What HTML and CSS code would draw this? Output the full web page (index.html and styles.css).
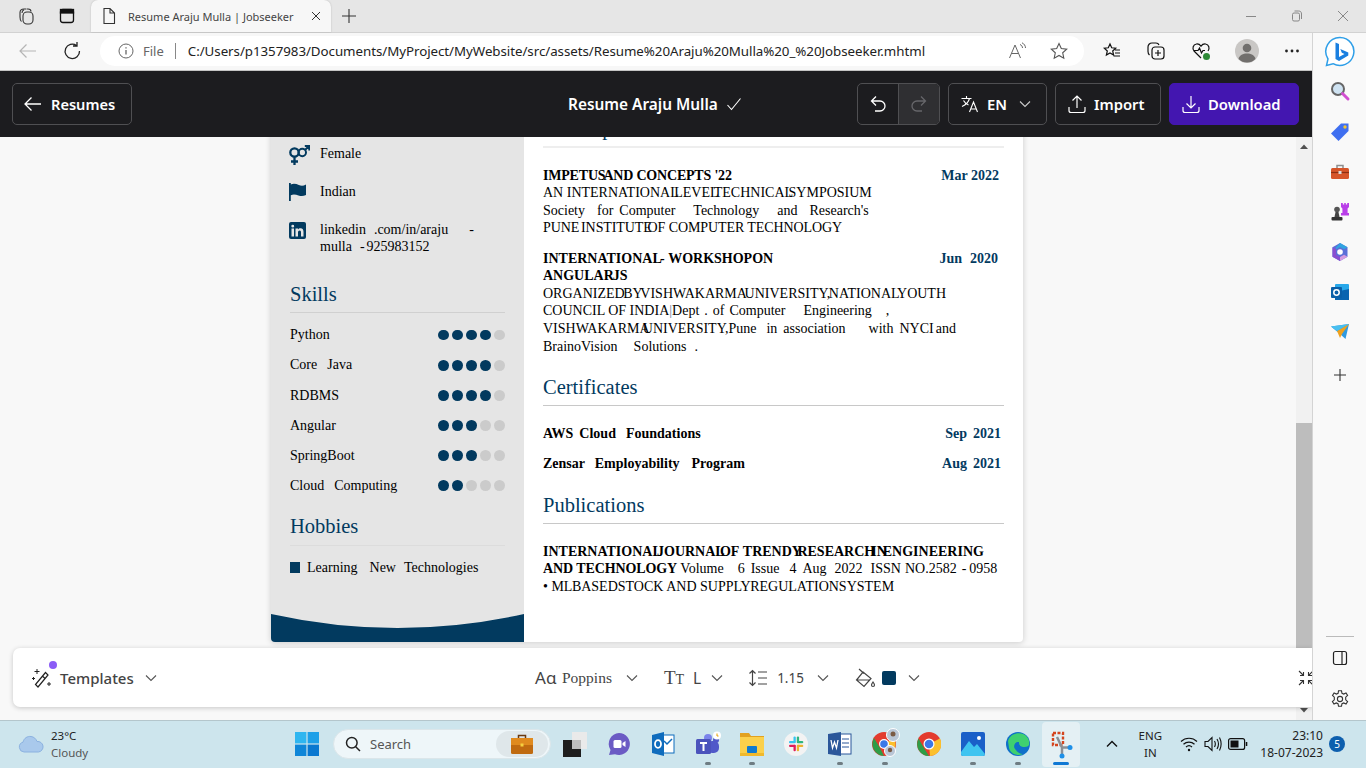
FILE: index.html
```html
<!DOCTYPE html>
<html lang="en">
<head>
<meta charset="utf-8">
<title>Resume Araju Mulla | Jobseeker</title>
<link rel="stylesheet" href="styles.css">
</head>
<body>
<svg class="sprite" aria-hidden="true">
  <symbol id="chev" viewBox="0 0 12 8"><path d="M1 1.500 6 6.500 11 1.500" fill="none" stroke="currentColor" stroke-width="1.100"/></symbol>
</svg>

<header class="tabstrip">
  <svg class="ts-ico first" width="20" height="20" viewBox="0 0 20 20" fill="none" stroke="#333" stroke-width="1.100"><rect x="7" y="6" width="10" height="12" rx="4"/><path d="M5.500 15.500C4 14.500 4 13 4 11V6.500C4 4 5.500 3 8 3h2.500M8 3.800C6.500 4.500 6 5.500 6 7"/><path d="M11 3h1c2 0 3 1 3 2.500"/></svg>
  <svg class="ts-ico second" width="20" height="20" viewBox="0 0 20 20" fill="none" stroke="#111" stroke-width="1.300"><rect x="3.500" y="3.500" width="13" height="13" rx="2.500"/><rect x="3.500" y="3.500" width="13" height="3.500" fill="#111"/></svg>
  <div class="tab">
    <svg width="16" height="18" viewBox="0 0 16 18" fill="none" stroke="#333" stroke-width="1.100"><path d="M3 1.500h6l4.500 4.500v10.500H3zM9 1.500V6h4.500"/></svg>
    <span class="tab-title">Resume Araju Mulla | Jobseeker</span>
    <svg class="tab-x" width="10" height="10" viewBox="0 0 10 10" stroke="#333" stroke-width="1"><path d="M1 1l8 8M9 1l-8 8"/></svg>
  </div>
  <svg class="tab-new" width="16" height="16" viewBox="0 0 16 16" stroke="#333" stroke-width="1.100"><path d="M8 1v14M1 8h14"/></svg>
  <div class="winctl">
    <svg width="12" height="12" viewBox="0 0 12 12" stroke="#888"><path d="M1 6.500h10"/></svg>
    <svg width="12" height="12" viewBox="0 0 12 12" fill="none" stroke="#888"><rect x="1.500" y="3" width="7" height="8" rx="1.500"/><path d="M3.500 1h4c2 0 3 1 3 3v5"/></svg>
    <svg width="12" height="12" viewBox="0 0 12 12" stroke="#888"><path d="M1 1l10 10M11 1 1 11"/></svg>
  </div>
</header>

<div class="browser">
  <div class="page">
    <nav class="toolbar">
      <svg class="tb-back" width="20" height="16" viewBox="0 0 20 16" fill="none" stroke="#b5b5b5" stroke-width="1.200"><path d="M18 8H2M8.500 1.500 2 8l6.500 6.500"/></svg>
      <svg class="tb-reload" width="20" height="20" viewBox="0 0 20 20" fill="none" stroke="#222" stroke-width="1.300"><path d="M14.500 4.500a7.200 7.200 0 1 0 3 5.500M15 1v4h-4"/></svg>
      <div class="addr">
        <svg width="16" height="16" viewBox="0 0 16 16" fill="none" stroke="#666"><circle cx="8" cy="8" r="7"/><path d="M8 7v4.500M8 4.200v1.300" stroke-width="1.300"/></svg>
        <span class="addr-file">File</span>
        <span class="addr-sep"></span>
        <span class="addr-url">C:/Users/p1357983/Documents/MyProject/MyWebsite/src/assets/Resume%20Araju%20Mulla%20_%20Jobseeker.mhtml</span>
        <svg class="addr-read" width="20" height="18" viewBox="0 0 20 18" fill="none" stroke="#666" stroke-width="1"><path d="M1.500 16 7 3l5.500 13M3.500 11.500h7"/><path d="M12 2.500c1.500.5 2.500 2 2.500 3.500M14 .8c2.200 1 3.500 3 3.500 5.200"/></svg>
        <svg class="addr-star" width="18" height="18" viewBox="0 0 18 18" fill="none" stroke="#555" stroke-width="1.100"><path d="M9 1.500l2.300 5 5.400.6-4 3.700 1.100 5.400L9 13.500l-4.800 2.700 1.100-5.400-4-3.700 5.400-.6z"/></svg>
      </div>
      <div class="tb-actions">
        <svg width="18" height="18" viewBox="0 0 18 18" fill="none" stroke="#111" stroke-width="1.200"><path d="M7 2l1.700 3.800 4 .4-3 2.800.9 4L7 11l-3.600 2 .9-4-3-2.800 4-.4zM12 8h5M12 11h5M10.500 14h6.500"/></svg>
        <svg width="20" height="20" viewBox="0 0 20 20" fill="none" stroke="#111" stroke-width="1.200"><rect x="6" y="6" width="12" height="12" rx="3"/><path d="M12 9v6M9 12h6M3.500 14C2.500 13 2 12 2 10.500V6c0-2 1.500-4 4-4h4c1.500 0 2.500.7 3 2"/></svg>
        <svg width="20" height="20" viewBox="0 0 20 20" fill="none" stroke="#111" stroke-width="1.200"><path d="M10 17 3 10C1 7.500 2 3.500 5.500 3c2-.2 3.500.8 4.500 2.200C11 3.800 12.500 2.800 14.500 3c3.500.5 4.500 4.500 2.500 7"/><path d="M3 9.500h4l1.500-2.500 2 5 1.500-2.500h2"/><circle cx="15.500" cy="15.500" r="3.500" fill="#2e8b38" stroke="none"/></svg>
        <svg width="24" height="24" viewBox="0 0 24 24"><circle cx="12" cy="12" r="12" fill="#c9c7c5"/><circle cx="12" cy="9" r="4.300" fill="#716f6d"/><path d="M3.500 20c1-4 4.500-5.500 8.500-5.500s7.500 1.500 8.500 5.500a12 12 0 0 1-17 0z" fill="#716f6d"/></svg>
        <svg width="16" height="4" viewBox="0 0 16 4" fill="#222"><circle cx="2.500" cy="2" r="1.400"/><circle cx="8" cy="2" r="1.400"/><circle cx="13.500" cy="2" r="1.400"/></svg>
      </div>
    </nav>

    <section class="app">
      <div class="appbar">
        <a class="btn btn-back">
          <svg width="20" height="16" viewBox="0 0 20 16" fill="none" stroke="#fff" stroke-width="1.300"><path d="M18 8H2M8.500 1.500 2 8l6.500 6.500"/></svg>
          Resumes
        </a>
        <div class="doc-title">
          Resume Araju Mulla
          <svg width="16" height="14" viewBox="0 0 16 14" fill="none" stroke="#fff" stroke-width="1.100"><path d="M1.500 8 5.500 12.500 14.500 1.500"/></svg>
        </div>
        <div class="bar-actions">
          <div class="undo-group">
            <span class="undo">
              <svg width="20" height="20" viewBox="0 0 20 20" fill="none" stroke="#fff" stroke-width="1.300"><path d="M8 2.500 3.500 7 8 11.500M3.500 7H12a4.500 4.500 0 0 1 0 10H7"/></svg>
            </span>
            <span class="redo">
              <svg width="20" height="20" viewBox="0 0 20 20" fill="none" stroke="#66666a" stroke-width="1.300"><path d="M12 2.500 16.500 7 12 11.500M16.500 7H8a4.500 4.500 0 0 0 0 10h5"/></svg>
            </span>
          </div>
          <a class="btn btn-lang">
            <svg width="20" height="20" viewBox="0 0 20 20" fill="none" stroke="#fff" stroke-width="1.100"><path d="M1.500 4.500h10M6.500 2v2.500M9.500 4.500C8.500 8 5.500 11 2 12.500M3.500 6.500c1 2 3 3.500 5 4.500M9.500 18l4-10 4 10M11 15h5"/></svg>
            EN
            <svg class="chev-l" width="12" height="8"><use href="#chev"/></svg>
          </a>
          <a class="btn btn-import">
            <svg width="20" height="20" viewBox="0 0 20 20" fill="none" stroke="#fff" stroke-width="1.200"><path d="M10 14V2M5.500 6.500 10 2l4.500 4.500M2 13v3.500a2 2 0 0 0 2 2h12a2 2 0 0 0 2-2V13"/></svg>
            Import
          </a>
          <a class="btn btn-download">
            <svg width="20" height="20" viewBox="0 0 20 20" fill="none" stroke="#fff" stroke-width="1.200"><path d="M10 2v12M5.500 9.500 10 14l4.500-4.500M2 13v3.500a2 2 0 0 0 2 2h12a2 2 0 0 0 2-2V13"/></svg>
            Download
          </a>
        </div>
      </div>

      <div class="viewport">
        <div class="canvas">
          <article class="resume">
            <aside class="side">
              <div class="side-body">
                <div class="contact">
                  <svg class="c-ico" width="22" height="20" viewBox="0 0 22 20" fill="none" stroke="#023a5f" stroke-width="2.300"><circle cx="6.500" cy="7.500" r="4.200"/><path d="M6.500 12v8M3 16.500h7"/><circle cx="14.300" cy="7.500" r="3.700" stroke-width="2"/><path d="M17 5l4-4M16.800 1H21.300V5.500" stroke-width="2"/></svg>
                  <span>Female</span>
                </div>
                <div class="contact">
                  <svg class="c-ico" width="22" height="18" viewBox="0 0 22 18" fill="#023a5f"><path d="M1 0h1.800v1.500c3-1.200 5.500-.5 8 .5s4.500 1 7.200-.5V12c-2.700 1.400-5 1.400-7.500.5S5.500 11 2.800 12.200V18H1z"/></svg>
                  <span>Indian</span>
                </div>
                <div class="contact">
                  <svg class="c-ico" width="22" height="20" viewBox="0 0 22 20"><rect x="1" y="1" width="17" height="17" rx="2" fill="#023a5f"/><path fill="#e5e5e5" d="M3.500 7.500h2.500V15.500H3.500zM4.750 3.700a1.450 1.450 0 1 1 0 2.900 1.450 1.450 0 0 1 0-2.900zM7.500 7.500H10v1.100c.5-.8 1.400-1.300 2.500-1.300 2.200 0 3 1.400 3 3.700v4.500H13v-4c0-1.200-.3-2-1.300-2-1.100 0-1.700.8-1.700 2v4H7.500z"/></svg>
                  <span class="contact-lines"><span class="ln"><span class="g8">linkedin .com/in/araju</span><span class="dash-gap">-</span></span><span class="ln"><span class="g8">mulla -</span><span class="g2"> </span>925983152</span></span>
                </div>

                <h2 class="sec side-sec">Skills</h2>
                <ul class="skills">
                  <li><span>Python</span><span class="dots"><i></i><i></i><i></i><i></i><i class="off"></i></span></li>
                  <li><span class="g10">Core Java</span><span class="dots"><i></i><i></i><i></i><i></i><i class="off"></i></span></li>
                  <li><span>RDBMS</span><span class="dots"><i></i><i></i><i></i><i></i><i class="off"></i></span></li>
                  <li><span>Angular</span><span class="dots"><i></i><i></i><i></i><i class="off"></i><i class="off"></i></span></li>
                  <li><span>SpringBoot</span><span class="dots"><i></i><i></i><i></i><i class="off"></i><i class="off"></i></span></li>
                  <li><span class="g10">Cloud Computing</span><span class="dots"><i></i><i></i><i class="off"></i><i class="off"></i><i class="off"></i></span></li>
                </ul>

                <h2 class="sec side-sec hob">Hobbies</h2>
                <div class="hobby"><i class="sq-bullet"></i><span><span class="g12">Learning New</span><span class="g8"> </span>Technologies</span></div>
              </div>
              <svg class="curve" width="253" height="28" viewBox="0 0 253 28" preserveAspectRatio="none"><path d="M0 0Q126.500 28 253 0V28H0z" fill="#023a5f"/></svg>
            </aside>

            <div class="body">
              <h2 class="sec first-sec">Accomplishments</h2>

              <div class="entry">
                <div class="e-top"><b class="ln tight"><span class="cl">IMPETUS AND</span> CONCEPTS '22</b><b class="date">Mar 2022</b></div>
                <span class="ln">AN <span class="ov">INTERNATIONAL LEVEL TECHNICAL SYMPOSIUM</span></span>
                <span class="ln"><span class="g12">Society </span>for<span class="g6"> </span>Computer<span class="g18"> </span>Technology<span class="g18"> </span>and<span class="g12"> </span>Research's</span>
                <span class="ln tighter"><span class="g2">PUNE </span><span class="ov">INSTITUTE OF</span> COMPUTER TECHNOLOGY</span>
              </div>

              <div class="entry second">
                <div class="e-top"><b class="ln"><span class="cl">INTERNATIONAL -</span> <span class="g6">WORKSHOP</span><span class="ov"> </span>ON</b><b class="date date-jun g8">Jun 2020</b></div>
                <b class="ln"><span class="cl">ANGULAR JS</span></b>
                <span class="ln"><span class="cl5">ORGANIZED BY VISHWAKARMA UNIVERSITY, NATIONAL YOUTH</span></span>
                <span class="ln">COUNCIL OF INDIA<span class="bar">|</span><span class="g5">Dept . of Computer</span><span class="g18"> </span><span class="g14">Engineering ,</span></span>
                <span class="ln"><span class="ov3">VISHWAKARMA UNIVERSITY,</span><span class="g10">Pune </span><span class="g6">in association</span><span class="g23"> </span><span class="g6">with NYCI</span><span class="g2"> </span>and</span>
                <span class="ln nudge"><span class="g16">BrainoVision </span><span class="g8">Solutions .</span></span>
              </div>

              <h2 class="sec">Certificates</h2>
              <div class="cert first-cert"><b><span class="g6">AWS Cloud</span><span class="g10"> </span>Foundations</b><b class="date g6">Sep 2021</b></div>
              <div class="cert"><b><span class="g10">Zensar </span>Employability<span class="g12"> </span>Program</b><b class="date g6">Aug 2021</b></div>

              <h2 class="sec pub">Publications</h2>
              <div class="entry first-cert">
                <b class="ln"><span class="ov">INTERNATIONAL JOURNAL OF</span> <span class="ov">TRENDY RESEARCH IN ENGINEERING</span></b>
                <span class="ln"><b class="tighter">AND TECHNOLOGY</b> Volume<span class="g14"> </span>6<span class="g6"> </span>Issue<span class="g10"> </span>4<span class="g6"> </span>Aug<span class="g8"> </span>2022<span class="g8"> </span>ISSN<span class="g4"> </span>NO.2582<span class="g5"> </span>-<span class="g3"> </span>0958</span>
                <span class="ln">• <span class="ws-c">ML BASED STOCK</span> AND <span class="ws-c">SUPPLY REGULATION SYSTEM</span></span>
              </div>
            </div>
          </article>
        </div>
        <div class="scrollbar">
          <svg width="16" height="17" viewBox="0 0 16 17" fill="#505050"><path d="M4 12 8 7.500 12 12z"/></svg>
          <div class="thumb"></div>
          <svg class="sb-down" width="16" height="17" viewBox="0 0 16 17" fill="#505050"><path d="M4 6 8 10.500 12 6z"/></svg>
        </div>

        <div class="dock">
          <div class="dock-tpl">
            <span class="wand">
              <svg width="22" height="22" viewBox="0 0 22 22" fill="none" stroke="#222" stroke-width="1.200"><path d="M14.500 5.500 17 8 7 20l-2.500-2.500zM11.500 9l2.500 2.500"/><path d="M6 2v5M3.500 4.500h5M2.500 10v3M1 11.500h3M18 15v4M16 17h4" stroke-width="1"/></svg>
              <i class="wand-dot"></i>
            </span>
            Templates
            <svg class="chev" width="12" height="8"><use href="#chev"/></svg>
          </div>
          <div class="dock-opts">
            <span class="opt"><span class="aa">A<span class="aa-a">ɑ</span></span><span class="opt-font">Poppins</span><svg class="chev" width="12" height="8"><use href="#chev"/></svg></span>
            <span class="opt opt-size"><span class="tt">T<small>T</small></span><span class="opt-v">L</span><svg class="chev" width="12" height="8"><use href="#chev"/></svg></span>
            <span class="opt opt-lh">
              <svg width="20" height="20" viewBox="0 0 20 20" fill="none" stroke="#444" stroke-width="1.200"><path d="M4.500 2.500v15M1.500 5.500l3-3 3 3M1.500 14.500l3 3 3-3M10 4h9M10 10h9M10 16h9"/></svg>
              <span class="opt-v">1.15</span><svg class="chev" width="12" height="8"><use href="#chev"/></svg></span>
            <span class="opt opt-color">
              <svg width="22" height="22" viewBox="0 0 22 22" fill="none" stroke="#444" stroke-width="1.200"><path d="M9 5 17 11.500 10 19.500 2.500 13zM2.500 13h13M5 2l5 4.500"/><path d="M19 15c1 1.500 1.500 2.200 1.500 3a1.500 1.500 0 0 1-3 0c0-.8.500-1.500 1.500-3z"/></svg>
              <i class="swatch"></i><svg class="chev" width="12" height="8"><use href="#chev"/></svg></span>
          </div>
          <svg class="dock-fit" width="16" height="16" viewBox="0 0 16 16" fill="none" stroke="#333" stroke-width="1.100"><path d="M1 1l4.500 4.500M5.500 2v3.500H2M15 1l-4.500 4.500M10.500 2v3.500H14M1 15l4.500-4.500M5.500 14v-3.500H2M15 15l-4.500-4.500M10.500 14v-3.500H14"/></svg>
        </div>
      </div>
    </section>
  </div>

  <aside class="edge">
    <svg class="bing" width="32" height="32" viewBox="0 0 32 32"><path d="M16 1.500a14 14 0 1 1-7 26.200L2.500 29.500 4 23A14 14 0 0 1 16 1.500z" fill="#fff" stroke="#2f9fe8" stroke-width="1.500"/><path d="M11.500 6.500 15 8v13l5.500-3-2.700-1.300-1.500-3.700 8 3.500v3L15 25l-3.500-2z" fill="#1a7fe0"/></svg>
    <svg width="22" height="22" viewBox="0 0 22 22"><circle cx="9" cy="9" r="6" fill="#cfe3f2" stroke="#666" stroke-width="2"/><path d="M13.500 13.500 19 19" stroke="#d14fd1" stroke-width="3" stroke-linecap="round"/></svg>
    <svg width="20" height="20" viewBox="0 0 20 20"><path d="M11 1.500h7.500V9L8.500 19 1 11.500z" fill="#3f6ff0"/><circle cx="15" cy="5" r="1.700" fill="#f4c430"/></svg>
    <svg width="20" height="20" viewBox="0 0 20 20"><path d="M7 6V3.500h6V6" fill="none" stroke="#8f8f8f" stroke-width="1.500"/><rect x="1" y="6" width="18" height="11" rx="1.500" fill="#d6552a"/><path d="M1 10.500h18" stroke="#8c2f12" stroke-width="1.200"/><rect x="8.500" y="9" width="3" height="3" fill="#ddd"/></svg>
    <svg width="20" height="20" viewBox="0 0 20 20"><circle cx="7" cy="7.500" r="2.800" fill="#555"/><path d="M5.500 10h3l1 5h-5z" fill="#444"/><rect x="1.500" y="15" width="11" height="3.500" rx="1" fill="#333"/><path d="M11 1h1.800v1.500h1.400V1h1.600v1.500h1.400V1H19v4l-1.400 1.500V11H19v2.500h-8V11h1.400V6.500L11 5z" fill="#b93fe8"/></svg>
    <svg width="20" height="20" viewBox="0 0 20 20"><path d="M10 1l7.500 4.300v9.400L10 19l-7.500-4.300V5.300z" fill="#5b6fd8"/><path d="M10 1l7.500 4.300-3.500 2L10 5 6 7.300V5.500z" fill="#2fa4e0"/><path d="M2.500 5.300 6 7.300v5.400l4 2.300V19l-7.500-4.300z" fill="#8a4fd0"/><path d="M17.500 14.700 10 19v-4l4-2.300z" fill="#d59be0"/><circle cx="10" cy="10" r="2.800" fill="#fff"/></svg>
    <svg width="20" height="20" viewBox="0 0 20 20"><rect x="5" y="2" width="14" height="16" rx="1" fill="#28a8ea"/><path d="M5 10 19 7v11H5z" fill="#0a64b0"/><rect x="1" y="5" width="11" height="11" rx="1" fill="#0a5fa8"/><circle cx="6.500" cy="10.500" r="2.700" fill="none" stroke="#fff" stroke-width="1.500"/></svg>
    <svg width="20" height="20" viewBox="0 0 20 20"><path d="M1 4.500 19 2 15.500 17 10 12z" fill="#2f9ae0"/><path d="M19 2 7 9 10 16l2-4z" fill="#f0a21f"/><path d="M1 4.500 7 9l12-7z" fill="#49c0f0"/></svg>
    <svg class="edge-plus" width="14" height="14" viewBox="0 0 14 14" stroke="#333" stroke-width="1.100"><path d="M7 1v12M1 7h12"/></svg>
    <div class="edge-foot">
      <i class="edge-sep"></i>
      <svg width="18" height="18" viewBox="0 0 18 18" fill="none" stroke="#222" stroke-width="1.200"><rect x="2.500" y="2.500" width="13" height="13" rx="2"/><path d="M11 2.500v13"/></svg>
      <svg width="20" height="20" viewBox="0 0 20 20" fill="none" stroke="#333" stroke-width="1.100"><path d="M8.500 1.800h3l.5 2.500 1.700.8 2.300-1.200 1.600 2.600-1.900 1.700v2.600l1.900 1.700-1.600 2.600-2.300-1.200-1.700.8-.5 2.500h-3l-.5-2.500-1.700-.8-2.300 1.200-1.600-2.600 1.900-1.700V8.200L2.500 6.500l1.600-2.600 2.300 1.200 1.700-.8z"/><circle cx="10" cy="10" r="2.600"/></svg>
    </div>
  </aside>
</div>

<footer class="taskbar">
  <div class="tb-weather">
    <svg width="28" height="20" viewBox="0 0 28 20"><path d="M7 18a5 5 0 0 1-1-9.800C7 4 10.500 2 14 2.500c3 .4 5 2.300 6 5a5.300 5.300 0 0 1 1.500 10.500z" fill="#a9c9ec" stroke="#8bb1e0"/></svg>
    <div class="wx-text"><span>23°C</span><span class="wx-sub">Cloudy</span></div>
  </div>
  <div class="tb-center">
    <svg class="win" width="24" height="24" viewBox="0 0 24 24"><rect width="11.400" height="11.400" fill="#2fb6f0"/><rect x="12.600" width="11.400" height="11.400" fill="#1ea0e8"/><rect y="12.600" width="11.400" height="11.400" fill="#0f86d8"/><rect x="12.600" y="12.600" width="11.400" height="11.400" fill="#0a78d0"/></svg>
    <div class="search">
      <svg width="16" height="16" viewBox="0 0 16 16" fill="none" stroke="#222" stroke-width="1.500"><circle cx="6.800" cy="6.800" r="5.300"/><path d="M10.500 10.500 15 15"/></svg>
      <span>Search</span>
      <span class="search-pic"><svg width="24" height="22" viewBox="0 0 24 22"><path d="M8.500 5V2.500h7V5" fill="none" stroke="#6b3a10" stroke-width="1.500"/><rect x="1" y="5" width="22" height="16" rx="1.500" fill="#c06a10"/><rect x="1" y="5" width="22" height="7" fill="#e08a1e"/><rect x="10.500" y="10.500" width="3" height="3" fill="#f5d040"/></svg></span>
    </div>
    <div class="apps">
      <span class="app-ico"><svg width="24" height="26" viewBox="0 0 24 26"><rect x="9" y="1" width="15" height="17" fill="#eaeaea"/><rect x="0" y="9" width="18" height="17" fill="#1e1e1e"/><rect x="9" y="9" width="9" height="9" fill="#bdbdbd"/></svg></span>
      <span class="app-ico"><svg width="24" height="24" viewBox="0 0 24 24"><path d="M12 1a11 11 0 1 1-4 21.300L2 23l1.500-5A11 11 0 0 1 12 1z" fill="#6b5bc4"/><rect x="6.500" y="8" width="8" height="8" rx="1.500" fill="#fff"/><path d="M15.500 11l3-2v6l-3-2z" fill="#fff"/></svg></span>
      <span class="app-ico"><svg width="24" height="24" viewBox="0 0 24 24"><rect x="6" y="3" width="17" height="18" fill="#fff" stroke="#0f6cbd"/><path d="M13 9l3 3 5-5" fill="none" stroke="#0f6cbd" stroke-width="1.500"/><path d="M1 3 13 0v24L1 21z" fill="#0f6cbd"/><ellipse cx="7" cy="12" rx="3" ry="3.800" fill="none" stroke="#fff" stroke-width="1.800"/></svg></span>
      <span class="app-ico run"><svg width="26" height="26" viewBox="0 0 26 26"><circle cx="13" cy="7" r="4" fill="#7b83eb"/><circle cx="21" cy="9" r="3" fill="#5059c9"/><rect x="12" y="10" width="12" height="12" rx="5" fill="#5059c9"/><rect x="1" y="8" width="15" height="15" rx="1.500" fill="#4b53bc"/><path d="M5 12h7M8.500 12v8" stroke="#fff" stroke-width="2"/><circle cx="22" cy="4.500" r="4" fill="#fff"/><path d="M22 2.500v2.500h1.500" fill="none" stroke="#e2a100"/></svg></span>
      <span class="app-ico run"><svg width="26" height="26" viewBox="0 0 26 26"><path d="M1 2h9l2 3h13v3H1z" fill="#e2a11f"/><rect x="1" y="6" width="24" height="19" fill="#fbd04b"/><rect x="8" y="15" width="10" height="7" rx="1" fill="#0f7ad0"/><rect x="1" y="22" width="24" height="3" fill="#f0b92c"/></svg></span>
      <span class="app-ico"><svg width="24" height="24" viewBox="0 0 24 24"><circle cx="12" cy="12" r="12" fill="#f3f3f3"/><rect x="9.500" y="4.500" width="2.300" height="6.500" rx="1.100" fill="#36c5f0"/><rect x="5" y="9" width="6.500" height="2.300" rx="1.100" fill="#36c5f0"/><rect x="12.800" y="4.500" width="2.300" height="6.500" rx="1.100" fill="#2eb67d"/><rect x="12.800" y="9" width="6.500" height="2.300" rx="1.100" fill="#2eb67d"/><rect x="12.800" y="12.800" width="2.300" height="6.500" rx="1.100" fill="#ecb22e"/><rect x="12.800" y="12.800" width="6.500" height="2.300" rx="1.100" fill="#ecb22e"/><rect x="9.500" y="12.800" width="2.300" height="6.500" rx="1.100" fill="#e01e5a"/><rect x="5" y="12.800" width="6.500" height="2.300" rx="1.100" fill="#e01e5a"/></svg></span>
      <span class="app-ico run"><svg width="24" height="26" viewBox="0 0 24 26"><rect x="7" y="3" width="16" height="20" fill="#fff" stroke="#2b579a"/><path d="M14 8h7M14 12h7M14 16h7" stroke="#2b579a"/><path d="M0 3 13 1v24L0 23z" fill="#2b579a"/><path d="M3 9l1.500 8 2-6 2 6L10 9" fill="none" stroke="#fff" stroke-width="1.300"/></svg></span>
      <span class="app-ico run prof"><svg width="28" height="30" viewBox="0 0 28 30"><circle cx="12" cy="16" r="12" fill="#e33b2e"/><path d="M12 16 22 10a12 12 0 0 1-6 17z" fill="#fbc02d"/><path d="M12 28a12 12 0 0 1-10-18l6 10z" fill="#2e9d47"/><circle cx="12" cy="16" r="5" fill="#fff"/><circle cx="12" cy="16" r="3.800" fill="#3b78e7"/><circle cx="21" cy="7" r="6.500" fill="#b9c6d6" stroke="#fff"/><circle cx="21" cy="6" r="2.500" fill="#7a5a44"/><circle cx="18" cy="23" r="5.500" fill="#b9c6d6" stroke="#fff"/><circle cx="18" cy="22" r="2.200" fill="#7a5a44"/></svg></span>
      <span class="app-ico"><svg width="24" height="24" viewBox="0 0 24 24"><circle cx="12" cy="12" r="12" fill="#e33b2e"/><path d="M12 12 23 6.500A12 12 0 0 1 13 24z" fill="#fbc02d"/><path d="M12 24A12 12 0 0 1 1.500 6.500L7 16z" fill="#2e9d47"/><circle cx="12" cy="12" r="5.500" fill="#fff"/><circle cx="12" cy="12" r="4.300" fill="#3b78e7"/></svg></span>
      <span class="app-ico run"><svg width="24" height="24" viewBox="0 0 24 24"><rect width="24" height="24" rx="2" fill="#1a5fc8"/><path d="M0 20 8 9l5 6 3-3 8 10v0a2 2 0 0 1-2 2H2a2 2 0 0 1-2-2z" fill="#3fc4f0"/><circle cx="18" cy="6" r="2" fill="#fff"/></svg></span>
      <span class="app-ico run"><svg width="24" height="24" viewBox="0 0 24 24"><circle cx="12" cy="12" r="12" fill="#0f70c9"/><path d="M2 9C4 2 12 0 17 2c5 2 7 7 6 11-1 2-4 2-6 2-3 0-5-2-4-5-4 0-6 4-3 8 1 2 4 4 7 4-6 3-13-1-14-6z" fill="#3fd06f"/><path d="M9 17c-2-3 0-7 4-7-.4 3 2 5 4 5-2 1-5 4-8 2z" fill="#0f70c9"/></svg></span>
      <span class="app-ico active">
        <svg width="24" height="30" viewBox="0 0 24 30" fill="none"><rect x="4" y="4" width="10" height="12" stroke="#d4451f" stroke-width="2.400" stroke-dasharray="3 1.500"/><path d="M8 8 13 18.500h9M13 18.500V27" stroke="#8a8f95" stroke-width="2.500"/><circle cx="21" cy="18.500" r="2.500" fill="#1e90e8"/><circle cx="13" cy="27" r="2.500" fill="#1e90e8"/></svg>
      </span>
    </div>
  </div>
  <div class="tray">
    <svg class="tray-up" width="12" height="8" viewBox="0 0 12 8" fill="none" stroke="#111" stroke-width="1.400"><path d="M1 6.500 6 1.500 11 6.500"/></svg>
    <div class="lang"><span>ENG</span><span>IN</span></div>
    <div class="sys">
      <svg width="18" height="16" viewBox="0 0 18 16" fill="none" stroke="#111" stroke-width="1.200"><path d="M1 5.500a11.500 11.500 0 0 1 16 0M3.500 8.300a8 8 0 0 1 11 0M6 11a4.500 4.500 0 0 1 6 0"/><circle cx="9" cy="14" r="1.200" fill="#111" stroke="none"/></svg>
      <svg width="18" height="16" viewBox="0 0 18 16" fill="none" stroke="#111" stroke-width="1.100"><path d="M1 5.500h3l4-4v13l-4-4H1zM10.500 5c1 1.800 1 4.200 0 6M13 3c1.800 3 1.800 7 0 10M15.500 1.500c2 4 2 9 0 13"/></svg>
      <svg width="20" height="12" viewBox="0 0 20 12"><rect x=".6" y=".6" width="16" height="10.800" rx="2" fill="none" stroke="#111" stroke-width="1.200"/><rect x="2.500" y="2.500" width="8" height="7" fill="#111"/><rect x="17.800" y="4" width="1.500" height="4" fill="#111"/></svg>
    </div>
    <div class="clock"><span>23:10</span><span>18-07-2023</span></div>
    <span class="notif">5</span>
  </div>
</footer>
</body>
</html>
```

FILE: styles.css
```css
* { box-sizing: border-box; }
html, body { margin: 0; padding: 0; }
body {
  width: 1366px;
  height: 768px;
  overflow: hidden;
  display: flex;
  flex-direction: column;
  font-family: "Noto Sans", sans-serif;
  background: #f8f8f8;
}
.sprite { display: none; }
svg { flex: none; display: block; }
i { display: block; font-style: normal; }
a { color: inherit; text-decoration: none; }

/* tab strip */
.tabstrip {
  height: 33px;
  flex: none;
  display: flex;
  align-items: center;
  background: #e6e6e6;
  border-bottom: 1px solid #d2d2d2;
}
.ts-ico.first { margin-left: 16px; }
.ts-ico.second { margin-left: 21px; }
.tab {
  margin-left: 14px;
  width: 240px;
  height: 32px;
  align-self: flex-start;
  background: #f7f7f7;
  border-radius: 7px 7px 0 0;
  display: flex;
  align-items: center;
  padding-left: 10px;
  box-shadow: 0 0 2px rgba(0,0,0,.2);
}
.tab-title { margin-left: 11px; font-size: 11px; color: #444; white-space: nowrap; }
.tab-x { margin-left: auto; margin-right: 10px; }
.tab-new { margin-left: 10px; }
.winctl { margin-left: auto; width: 104px; margin-right: 17px; display: flex; justify-content: space-between; }

/* browser */
.browser { flex: 1; display: flex; min-height: 0; }
.page { width: 1312px; flex: none; display: flex; flex-direction: column; }
.toolbar {
  height: 38px;
  flex: none;
  background: #f7f7f7;
  display: flex;
  align-items: center;
  padding-bottom: 1px;
  border-bottom: 1px solid #c4c4c4;
}
.tb-back { margin-left: 18px; }
.tb-reload { margin-left: 24px; }
.addr {
  margin-left: 18px;
  width: 984px;
  height: 30px;
  border-radius: 15px;
  background: #fff;
  display: flex;
  align-items: center;
  padding-left: 18px;
  font-size: 13px;
  color: #333;
}
.addr-file { margin-left: 9px; color: #666; font-size: 13px; }
.addr-sep { width: 1px; height: 16px; background: #888; margin: 0 12px 0 11px; }
.addr-url { white-space: nowrap; font-size: 13.330px; letter-spacing: -.05px; color: #222; }
.addr-read { margin-left: auto; }
.addr-star { margin-left: 22px; margin-right: 16px; }
.tb-actions { flex: 1; display: flex; align-items: center; justify-content: space-between; padding: 0 12px 0 19px; }

/* app */
.app { flex: 1; display: flex; flex-direction: column; min-height: 0; }
.appbar {
  height: 66px;
  flex: none;
  background: #1c1c1f;
  display: flex;
  align-items: center;
  padding: 0 13px 0 12px;
  position: relative;
  color: #fff;
  font-size: 14.800px;
  font-weight: 600;
}
.btn {
  height: 42px;
  border: 1px solid #4f4f52;
  border-radius: 5px;
  display: flex;
  align-items: center;
  white-space: nowrap;
}
.btn-back { width: 120px; padding-left: 10px; gap: 8px; font-size: 14.600px; }
.doc-title { position: absolute; left: 568px; display: flex; align-items: center; gap: 8px; white-space: nowrap; font-size: 15.400px; }
.bar-actions { margin-left: auto; display: flex; gap: 8px; }
.undo-group { display: flex; width: 83px; height: 42px; border: 1px solid #4f4f52; border-radius: 5px; overflow: hidden; }
.undo, .redo { flex: 1; display: flex; align-items: center; justify-content: center; }
.redo { background: #2f2f32; border-left: 1px solid #4f4f52; }
.btn-lang { width: 99px; padding-left: 11px; gap: 7px; }
.chev-l { margin-left: 5px; color: #ccc; }
.btn-import { width: 106px; padding-left: 11px; gap: 7px; }
.btn-download { width: 130px; padding-left: 11px; gap: 7px; background: #4316b0; border-color: #4316b0; }

.viewport { flex: 1; position: relative; display: flex; min-height: 0; overflow: hidden; background: #f8f8f8; }
.canvas { width: 1296px; flex: none; overflow: hidden; display: flex; justify-content: flex-start; padding-left: 271px; }
.resume {
  width: 752px;
  height: 526px;
  margin-top: -21px;
  display: flex;
  background: #fff;
  border-radius: 0 0 4px 4px;
  box-shadow: 0 1px 6px rgba(0,0,0,.18);
  font-family: "Liberation Serif", serif;
  font-size: 14px;
  line-height: 17.500px;
  color: #000;
}
.side { width: 253px; flex: none; background: #e5e5e5; display: flex; flex-direction: column; border-radius: 0 0 0 4px; overflow: hidden; }
.side-body { padding: 29px 19px 0; }
.contact { display: flex; gap: 10px; margin-bottom: 20.500px; height: 17.500px; }
.contact .c-ico { margin-left: -2px; }
.contact:nth-child(3) { height: 34px; margin-bottom: 0; line-height: 17px; }
.contact-lines { display: block; }
.sec {
  margin: 20px 0 0;
  font-weight: 400;
  font-size: 20.500px;
  line-height: 24px;
  color: #023a5f;
  padding-bottom: 6px;
  border-bottom: 1px solid #c8c8c8;
}
.side-sec { border-bottom-color: #d0d0d0; margin-top: 27px; }
.side-sec.hob { margin-top: 19.600px; padding-bottom: 7px; border-bottom-color: #dcdcdc; }
.first-sec { margin-top: 0; border-bottom: 2px solid #eee; padding-bottom: 6px; }
.skills { list-style: none; margin: 13.200px 0 0; padding: 0; display: flex; flex-direction: column; gap: 12.700px; }
.skills li { display: flex; justify-content: space-between; align-items: center; }
.dots { display: flex; gap: 3.200px; }
.dots i { width: 10.800px; height: 10.800px; border-radius: 50%; background: #023a5f; }
.dots i.off { background: #cbcbcb; }
.hobby { margin-top: 12.500px; display: flex; align-items: center; gap: 7px; }
.sq-bullet { width: 10px; height: 11px; background: #023a5f; }
.curve { margin-top: auto; }

.body { flex: 1; padding: 0 19px; }
.entry { margin-top: 18.500px; }
.entry.second { margin-top: 13px; }
.nudge { margin-top: .5px; }
.ln { display: block; white-space: nowrap; }
.e-top { display: flex; justify-content: space-between; padding-right: 5px; }
.date { color: #023a5f; font-weight: 700; white-space: nowrap; }
.date-jun { margin-right: 1px; }
.cert { display: flex; padding-right: 3px; margin-top: 12.500px; }
.cert .date { margin-left: auto; }
.cert.first-cert, .entry.first-cert { margin-top: 19px; }
.pub { margin-top: 20px; }
.bar { color: #5d7f9c; }
.tight { letter-spacing: -.2px; }
.tighter { letter-spacing: -.1px; }

.ws-c { word-spacing: -3.500px; }
.cl { word-spacing: -4.500px; }
.cl5 { word-spacing: -5px; }
.ov { word-spacing: -7.500px; }
.ov3 { word-spacing: -9.500px; }
.g2 { word-spacing: -1.500px; }
.g3 { word-spacing: -.5px; }
.g4 { word-spacing: .5px; }
.g5 { word-spacing: 1.500px; }
.g6 { word-spacing: 2.500px; }
.g8 { word-spacing: 4.500px; }
.g10 { word-spacing: 6.500px; }
.g12 { word-spacing: 8.500px; }
.g14 { word-spacing: 10.500px; }
.g16 { word-spacing: 12.500px; }
.g18 { word-spacing: 14.500px; }
.g23 { word-spacing: 19.500px; }
.dash-gap { margin-left: 21px; }

/* scrollbar */
.scrollbar { width: 16px; flex: none; background: #f1f1f1; display: flex; flex-direction: column; }
.thumb { margin-top: 269px; height: 272px; background: #bdbdbd; }
.sb-down { margin-top: auto; margin-bottom: 1px; }

/* dock */
.dock {
  position: absolute;
  left: 13px;
  right: 0;
  bottom: 13px;
  height: 59px;
  background: #fff;
  border-radius: 7px 0 0 7px;
  box-shadow: 0 1px 5px rgba(0,0,0,.2);
  display: flex;
  align-items: center;
  overflow: hidden;
  color: #444;
}
.dock-tpl { width: 522px; flex: none; display: flex; align-items: center; padding-left: 18px; font-size: 15px; font-weight: 500; gap: 7px; }
.wand { position: relative; display: block; }
.wand-dot { position: absolute; right: -4px; top: -6px; width: 8px; height: 8px; border-radius: 50%; background: #8b5cf6; }
.chev { color: #555; }
.dock-tpl .chev { margin-left: 4px; }
.dock-opts { display: flex; align-items: center; }
.opt { display: flex; align-items: center; }
.aa { font-size: 17px; width: 27px; }
.opt-font { font-family: "Liberation Serif", serif; font-size: 15.500px; width: 64px; padding-top: 1px; }
.opt-size { margin-left: 26px; }
.tt { font-family: "Liberation Serif", serif; font-size: 19px; width: 29px; }
.tt small { font-size: 14px; }
.opt-v { font-size: 15.500px; }
.opt-size .chev { margin-left: 10px; }
.opt-lh { margin-left: 25px; gap: 9px; }
.opt-lh .opt-v { font-size: 13.500px; }
.opt-lh .chev { margin-left: 4px; }
.opt-color { margin-left: 25px; }
.swatch { width: 14px; height: 14px; border-radius: 2px; background: #023a5f; margin-left: 6px; }
.opt-color .chev { margin-left: 12px; }
.dock-fit { margin-left: auto; margin-right: -2px; }

/* edge sidebar */
.edge {
  flex: 1;
  background: #f9f9f9;
  border-left: 1px solid #d4d4d4;
  display: flex;
  flex-direction: column;
  align-items: center;
  gap: 20px;
  padding-top: 3px;
}
.bing { margin-bottom: -8px; }
.edge-plus { margin-top: 6px; }
.edge-foot { margin-top: auto; display: flex; flex-direction: column; align-items: center; gap: 12px; padding-bottom: 11px; }
.edge-sep { width: 28px; height: 1px; background: #bbb; }
.edge-foot svg + svg { margin-top: 10px; }

/* taskbar */
.taskbar {
  height: 48px;
  flex: none;
  background: #cde5ed;
  border-top: 1px solid #b4c6cc;
  display: flex;
  align-items: center;
  padding-bottom: 1px;
  font-size: 11.500px;
  color: #222;
}
.tb-weather { width: 295px; flex: none; display: flex; align-items: center; padding-left: 17px; gap: 6px; }
.wx-text { display: flex; flex-direction: column; line-height: 17px; }
.wx-sub { color: #555; }
.tb-center { display: flex; align-items: center; }
.search {
  margin-left: 14px;
  width: 218px;
  height: 30px;
  border-radius: 15px;
  background: #eef6f9;
  border: 1px solid #dbe6ea;
  display: flex;
  align-items: center;
  padding: 0 2px 0 11px;
  font-size: 13px;
  color: #555;
}
.search > span:first-of-type { margin-left: 9px; }
.search-pic { margin-left: auto; width: 52px; height: 26px; border-radius: 13px; background: #dfe7ea; display: flex; align-items: center; justify-content: center; }
.apps { margin-left: 1.500px; display: flex; align-items: center; }
.app-ico { width: 44.300px; height: 46px; display: flex; align-items: center; justify-content: center; position: relative; }
.app-ico.prof svg { margin-left: 3px; margin-bottom: 3px; }
.app-ico.run::after { content: ""; position: absolute; bottom: 2px; left: 50%; margin-left: -3px; width: 6px; height: 3px; border-radius: 2px; background: #6e7c82; }
.app-ico.active { background: #e4f0f4; border-radius: 4px; width: 38px; margin-left: 2px; height: 45px; }
.app-ico.active::after { content: ""; position: absolute; bottom: 2px; left: 11px; width: 16px; height: 3px; border-radius: 2px; background: #0f78d4; }
.tray { margin-left: auto; display: flex; align-items: center; }
.tray-up { margin-right: 15px; }
.lang { display: flex; flex-direction: column; align-items: center; line-height: 17px; width: 34px; }
.sys { margin-left: 13px; display: flex; align-items: center; gap: 6px; }
.clock { margin-left: 12px; display: flex; flex-direction: column; align-items: flex-end; line-height: 17px; font-size: 12px; }
.notif { margin: 0 21px 0 6px; width: 16px; height: 16px; border-radius: 50%; background: #0d5fae; color: #fff; font-size: 10px; display: flex; align-items: center; justify-content: center; }
```
